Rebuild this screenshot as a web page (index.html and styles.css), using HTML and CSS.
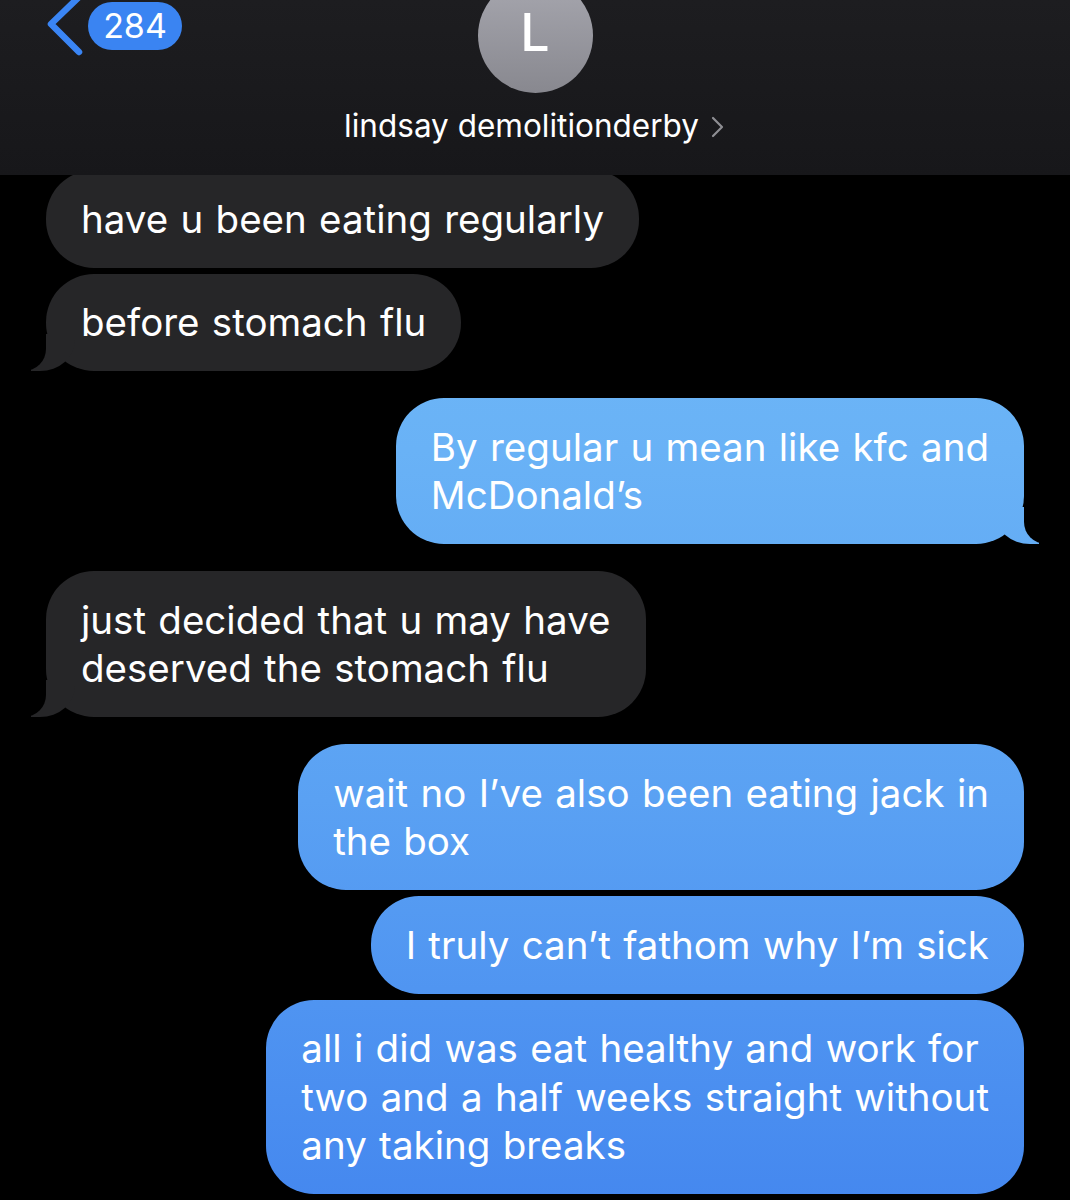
FILE: index.html
```html
<!DOCTYPE html>
<html>
<head>
<meta charset="utf-8">
<link rel="stylesheet" href="styles.css">
</head>
<body>
<div class="screen">
  <header class="topbar">
    <div class="left">
      <svg class="back" width="44" height="56" viewBox="0 0 44 56"><path d="M36 -4 L7 24 L35 52" fill="none" stroke="#3a85f4" stroke-width="6.5" stroke-linecap="round" stroke-linejoin="round"/></svg>
      <span class="badge">284</span>
    </div>
    <div class="contact">
      <div class="avatar">L</div>
      <div class="name">lindsay demolitionderby<svg class="chev" width="16" height="24" viewBox="0 0 16 24"><path d="M3 3 L12 12 L3 21" fill="none" stroke="#8e8e93" stroke-width="2.2" stroke-linecap="round" stroke-linejoin="round"/></svg></div>
    </div>
    <div class="right"></div>
  </header>
  <main class="thread">
    <div class="msg them">have u been eating regularly</div>
    <div class="msg them cont tail">before stomach flu</div>
    <div class="msg me tail">By regular u mean like kfc and<br>McDonald’s</div>
    <div class="msg them tail">just decided that u may have<br>deserved the stomach flu</div>
    <div class="msg me">wait no I’ve also been eating jack in<br>the box</div>
    <div class="msg me cont">I truly can’t fathom why I’m sick</div>
    <div class="msg me cont">all i did was eat healthy and work for<br>two and a half weeks straight without<br>any taking breaks</div>
  </main>
</div>
</body>
</html>
```
FILE: styles.css
```css
* { box-sizing: border-box; }
html, body { margin: 0; padding: 0; background: #000; }
body { font-family: "Inter", "Liberation Sans", sans-serif; color: #fff; }

.screen { position: relative; width: 1070px; height: 1200px; overflow: hidden; background: #000; }

.topbar {
  position: absolute; top: 0; left: 0; right: 0; height: 175px; z-index: 10;
  background: linear-gradient(180deg, #1d1d20 0%, #17171a 100%);
  display: grid; grid-template-columns: 1fr auto 1fr; align-items: start;
  overflow: hidden;
}
.left { display: flex; align-items: flex-start; padding-left: 44px; }
.back { display: block; }
.badge {
  margin-top: 2px; height: 48px; padding: 0 14px; border-radius: 24px;
  background: #3a84f2; color: #fff; font-size: 34px; line-height: 48px; font-weight: 400;
  display: inline-block; min-width: 94px; text-align: center;
}
.contact { display: flex; flex-direction: column; align-items: center; }
.avatar {
  margin-top: -22px; width: 115px; height: 115px; border-radius: 50%;
  background: linear-gradient(180deg, #a7a7af 0%, #88888f 100%);
  display: flex; align-items: flex-end; justify-content: center;
  font-size: 52px; font-weight: 500; color: #fff; line-height: 1; padding-bottom: 34px;
}
.name { margin-top: 14px; font-size: 31.5px; line-height: 38px; display: flex; align-items: center; white-space: nowrap; }
.chev { margin-left: 11px; margin-top: 2px; }

.thread { display: flex; flex-direction: column; padding: 170px 46px 0; }
.msg {
  position: relative; white-space: nowrap;
  font-size: 38.5px; line-height: 48.5px; padding: 24.5px 35px; word-spacing: 1.5px;
  border-radius: 48px; margin-top: 27px;
}
.msg:first-child { margin-top: 0; }
.msg.cont { margin-top: 6px; }
.them { align-self: flex-start; background: #262628; }
.me {
  align-self: flex-end;
  background: linear-gradient(180deg, #78bff8 0px, #69b2f6 450px, #5aa1f3 800px, #4a8ef0 1100px, #4588ef 1200px) fixed;
}

.msg.tail::before, .msg.tail::after { content: ""; position: absolute; bottom: 0; height: 37px; }
.them.tail::before { left: -15px; width: 44px; background: #262628; border-bottom-right-radius: 35px 31px; }
.them.tail::after { left: -57px; width: 57px; background: #000; border-bottom-right-radius: 22px; }
.me.tail::before {
  right: -15px; width: 44px; border-bottom-left-radius: 35px 31px;
  background: linear-gradient(180deg, #78bff8 0px, #69b2f6 450px, #5aa1f3 800px, #4a8ef0 1100px, #4588ef 1200px) fixed;
}
.me.tail::after { right: -57px; width: 57px; background: #000; border-bottom-left-radius: 22px; }
```
